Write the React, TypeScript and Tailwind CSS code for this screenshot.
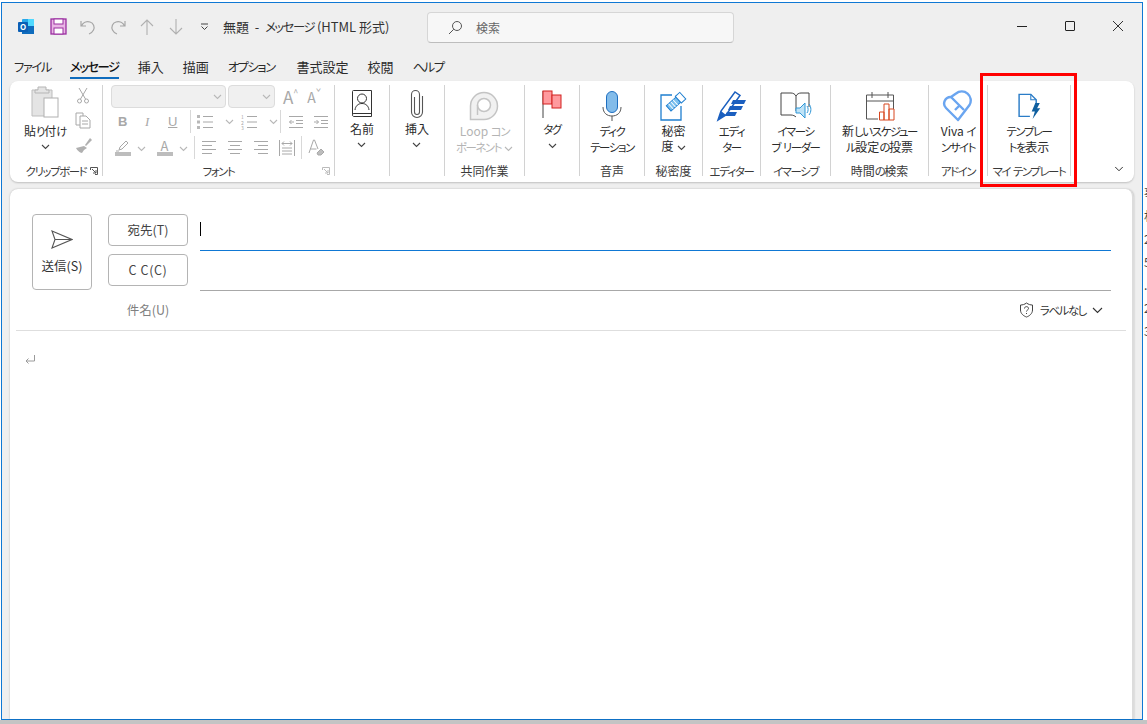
import type { ReactNode } from "react";
import { ChevronDown } from "lucide-react";

// the reference font sets kana much tighter than Noto, so kana runs get their own spacing
const Txt = ({ children }: { children: string }) => (
  <>
    {children.split(/([ぁ-んァ-ヶー]+)/).map((part, i) =>
      i % 2 === 1 ? (
        <span key={i} className="text-[0.95em] tracking-[-0.12em]">
          {part}
        </span>
      ) : (
        <span key={i}>{part}</span>
      )
    )}
  </>
);

const Chev = ({ className = "text-[#444]" }: { className?: string }) => (
  <svg width="9" height="6" viewBox="0 0 9 6" className={`inline-block ${className}`}>
    <path d="M1 1l3.500 3.500L8 1" fill="none" stroke="currentColor" strokeWidth="1.100" />
  </svg>
);

// one ribbon group, the label sits at the bottom
const Group = ({ w, label, children }: { w: string; label?: string; children: ReactNode }) => (
  <div className={`${w} relative flex flex-col shrink-0 border-r border-[#d2d2d2] h-[91px]`}>
    <div className="flex-1 flex justify-center">{children}</div>
    <div className="h-[16px] text-[12px] leading-[22px] text-center text-[#3a3a3a] whitespace-nowrap">
      {label && <Txt>{label}</Txt>}
    </div>
  </div>
);

const Big = ({
  icon,
  lines,
  chev,
  lineChev,
  gray,
  top = "pt-[4px]",
}: {
  icon: ReactNode;
  lines: string[];
  chev?: boolean;
  lineChev?: boolean;
  gray?: boolean;
  top?: string;
}) => (
  <div className={`flex flex-col items-center ${top}`}>
    <div className="h-[34px] flex items-center justify-center">{icon}</div>
    <div className={`text-[12px] leading-[15px] text-center whitespace-nowrap ${gray ? "text-[#b4b4b4]" : "text-[#2b2b2b]"}`}>
      {lines.map((l, i) => (
        <div key={l}>
          <Txt>{l}</Txt>
          {lineChev && i === lines.length - 1 && <Chev className={`ml-[3px] ${gray ? "text-[#b8b8b8]" : "text-[#444]"}`} />}
        </div>
      ))}
    </div>
    {chev && (
      <div className="mt-[1px] leading-none">
        <Chev />
      </div>
    )}
  </div>
);

const Lines = ({ kind }: { kind: "l" | "c" | "r" }) => {
  const short = kind === "l" ? "M1 5.500h10M1 13.500h10" : kind === "c" ? "M3 5.500h10M3 13.500h10" : "M5 5.500h10M5 13.500h10";
  return (
    <svg width="16" height="16" viewBox="0 0 16 16" stroke="#a8a8a8" fill="none">
      <path d="M1 1.500h14M1 9.500h14" />
      <path d={short} />
    </svg>
  );
};

const Bullets = ({ num }: { num?: boolean }) => (
  <svg width="26" height="16" viewBox="0 0 26 16" fill="none">
    {num ? (
      <>
        <text x="0" y="5" fontSize="5" fill="#a8a8a8">1</text>
        <text x="0" y="10.500" fontSize="5" fill="#a8a8a8">2</text>
        <text x="0" y="16" fontSize="5" fill="#a8a8a8">3</text>
      </>
    ) : (
      <>
        <rect x="0" y="1" width="3" height="3" fill="#b8b8b8" />
        <rect x="0" y="6.500" width="3" height="3" fill="#b8b8b8" />
        <rect x="0" y="12" width="3" height="3" fill="#b8b8b8" />
      </>
    )}
    <path d="M6 2.500h10M6 8h10M6 13.500h10" stroke="#a8a8a8" />
  </svg>
);

const PersonBook = () => (
  <svg width="22" height="30" viewBox="0 0 22 30" fill="none" stroke="#333" strokeWidth="1">
    <path d="M1.500 25.500V2.500a1 1 0 0 1 1-1h18v26H3a1.500 1.500 0 0 1-1.500-2 1.500 1.500 0 0 1 1.500-1h17.500" />
    <circle cx="11" cy="9.500" r="4.500" />
    <path d="M4 21c.5-4 3-6.500 7-6.500s6.500 2.500 7 6.500" />
  </svg>
);

const Clip = () => (
  <svg width="14" height="30" viewBox="0 0 14 30" fill="none" stroke="#555" strokeWidth="1.100">
    <path d="M4.500 8v15a2.500 2.500 0 0 0 5 0V5.500a4 4 0 0 0-8 0V23a5.500 5.500 0 0 0 11 0V7" />
  </svg>
);

const Loop = () => (
  <svg width="30" height="30" viewBox="0 0 30 30" fill="none" stroke="#c4c4c4" strokeWidth="1.500">
    <path d="M1.500 28.500V15a13.500 13.500 0 1 1 13.500 13.500z" fill="#f1f1f1" />
    <circle cx="15" cy="14" r="6.500" fill="#fff" />
    <path d="M8.500 14v10" />
  </svg>
);

const Flag = () => (
  <svg width="20" height="28" viewBox="0 0 20 28">
    <path d="M1 1v27" stroke="#444" strokeWidth="1" />
    <rect x="1" y="1" width="9" height="13" fill="#ff9a9e" stroke="#d2201f" />
    <rect x="10" y="5" width="9" height="13" fill="#ff9a9e" stroke="#d2201f" />
  </svg>
);

const Mic = () => (
  <svg width="20" height="30" viewBox="0 0 20 30" fill="none">
    <rect x="4.500" y="0.500" width="11" height="21" rx="5.500" fill="#83bcea" stroke="#1f6fc0" />
    <path d="M1 16c0 6 4 9 9 9s9-3 9-9M10 25v5" stroke="#555" />
  </svg>
);

const Sensitivity = () => (
  <svg width="30" height="30" viewBox="0 0 30 30" fill="none">
    <path d="M13 4H2v25h20V15" stroke="#1f7fd0" strokeWidth="1.300" />
    <g transform="rotate(-42 16 11)">
      <rect x="7" y="8" width="13" height="7" fill="#7cc0ee" stroke="#1f7fd0" />
      <rect x="20" y="7" width="6" height="9" fill="#fff" stroke="#1f7fd0" />
      <path d="M10 8v7M13 8v7M16 8v7" stroke="#fff" />
    </g>
  </svg>
);

const EditorPen = () => (
  <svg width="32" height="32" viewBox="0 0 32 32" fill="none">
    <path d="M2 30l3-9L19 2l5 3.500L10 25z" fill="#fff" stroke="#1b5fbf" strokeWidth="1.500" />
    <path d="M2 30l3-9 5 4z" fill="#1b5fbf" />
    <path d="M17 10h13l-2 4H15zM14 16h13l-2 4H12zM11 22h10l-2 4H9z" fill="#1b5fbf" />
  </svg>
);

const Reader = () => (
  <svg width="32" height="30" viewBox="0 0 32 30" fill="none">
    <path d="M1 2h10c2 0 4 1 5 3 1-2 3-3 5-3h8v14M1 2v22h10c2 0 4 1 5 2M16 5v15" stroke="#444" />
    <path d="M16 17h4l5-5v15l-5-5h-4z" fill="#bfe3f7" stroke="#2f96d6" />
    <path d="M27 15c1.500 2 1.500 5 0 7M29 13c2.500 3 2.500 8 0 11" stroke="#2f96d6" />
  </svg>
);

const Poll = () => (
  <svg width="30" height="30" viewBox="0 0 30 30" fill="none">
    <path d="M13 28H1.500V4h27v14M1.500 10h27M7 1v6M23 1v6" stroke="#555" />
    <path d="M14.500 21h4.500v8h-4.500zM19 13h5v16h-5zM24 18h5v11h-5z" fill="#fff" stroke="#d8461f" />
  </svg>
);

const Viva = () => (
  <svg width="32" height="32" viewBox="0 0 32 32" fill="none" stroke="#6aa5f0" strokeWidth="2.400" strokeLinejoin="round">
    <path d="M16 30L4 18A6.500 6.500 0 0 1 9 7l5-3.500A9 9 0 0 1 27.500 15z" />
    <path d="M9 7l13 13M13 20l4-4" />
  </svg>
);

const Template = () => (
  <svg width="24" height="27" viewBox="0 0 26 30" fill="none">
    <path d="M14 26H2V1.500h13l6 6v5" stroke="#2a7cc7" strokeWidth="1.600" />
    <path d="M15 1.500v6h6" stroke="#2a7cc7" strokeWidth="1.200" />
    <path d="M20 11h5l-3 6h3.500L17 29l2.500-8.500H16z" fill="#0f5f9f" />
  </svg>
);

const SmallRow = ({ children }: { children: ReactNode }) => <div className="flex items-center h-[25px] mt-px">{children}</div>;

const tabs = ["ファイル", "メッセージ", "挿入", "描画", "オプション", "書式設定", "校閲", "ヘルプ"];

export default function App() {
  return (
    <div
      className="relative w-[1147px] h-[724px] bg-white overflow-hidden text-[12px] [font-feature-settings:'palt']"
      style={{ fontFamily: "'Noto Sans CJK JP', 'Noto Sans', sans-serif" }}
    >
      <div className="flex">
        <div className="ml-px mt-[2px] w-[1142px] h-[718px] shrink-0 border border-[#0f78d4] bg-[#efefef] flex flex-col">
          {/* title bar */}
          <div className="relative h-[47px] flex items-center pl-[15px] shrink-0">
            <svg width="18" height="18" viewBox="0 0 18 18" className="mt-[1px]">
              <rect x="5" y="1" width="12" height="15" rx="1" fill="#28a8ea" />
              <rect x="11" y="1" width="6" height="7" fill="#50d9ff" />
              <rect x="5" y="8" width="12" height="8" fill="#0f6cbd" />
              <rect x="1" y="4" width="10" height="10" rx="1" fill="#0a5fb5" />
              <text x="3" y="12" fontSize="8" fontWeight="700" fill="#fff">O</text>
            </svg>
            <svg width="17" height="17" viewBox="0 0 17 17" className="ml-[15px]" fill="none">
              <rect x="1" y="1" width="15" height="15" fill="#e9b6e5" stroke="#9a2fa0" strokeWidth="1.300" />
              <rect x="4" y="1" width="9" height="5" fill="#fff" stroke="#9a2fa0" />
              <rect x="4" y="10" width="9" height="6" fill="#fff" stroke="#9a2fa0" />
            </svg>
            <svg width="16" height="16" viewBox="0 0 16 16" className="ml-[13px]" fill="none" stroke="#a6a6a6" strokeWidth="1.200">
              <path d="M1 2v5h5M1.500 7C3 3.500 6.500 2 10 3s5 5 3.500 8-3 3.500-4.500 4" />
            </svg>
            <svg width="16" height="16" viewBox="0 0 16 16" className="ml-[14px]" fill="none" stroke="#a6a6a6" strokeWidth="1.200">
              <path d="M15 2v5h-5M14.500 7C13 3.500 9.500 2 6 3S1 8 2.500 11s3 3.500 4.500 4" />
            </svg>
            <svg width="14" height="16" viewBox="0 0 14 16" className="ml-[14px]" fill="none" stroke="#b0b0b0" strokeWidth="1.100">
              <path d="M7 16V1M1 7l6-6 6 6" />
            </svg>
            <svg width="14" height="16" viewBox="0 0 14 16" className="ml-[15px]" fill="none" stroke="#b0b0b0" strokeWidth="1.100">
              <path d="M7 0v15M1 9l6 6 6-6" />
            </svg>
            <svg width="9" height="8" viewBox="0 0 9 8" className="ml-[17px]" fill="none" stroke="#444">
              <path d="M1 1h7M1.500 3.500L4.500 6.500 7.500 3.500" />
            </svg>
            <div className="ml-[14px] text-[13px] text-[#333] whitespace-nowrap">
              <Txt>{"無題\u00a0 - \u00a0メッセージ (HTML 形式)"}</Txt>
            </div>
            {/* search */}
            <div className="absolute left-[425px] top-[9px] w-[307px] h-[31px] rounded-[4px] border border-[#d6d6d6] border-b-[#bdbdbd] bg-[#f7f7f7] flex items-center pl-[20px]">
              <svg width="15" height="15" viewBox="0 0 15 15" fill="none" stroke="#555">
                <circle cx="9" cy="6" r="4.500" />
                <path d="M5.800 9.200L1 14" />
              </svg>
              <span className="ml-[13px] text-[#666]">検索</span>
            </div>
            {/* window controls */}
            <div className="absolute right-[19px] top-[18px] flex items-center gap-[38px]">
              <div className="w-[10px] h-px bg-[#222]" />
              <div className="w-[10px] h-[10px] border border-[#222] rounded-[1px]" />
              <svg width="10" height="10" viewBox="0 0 10 10" stroke="#333">
                <path d="M0 0l10 10M10 0L0 10" />
              </svg>
            </div>
          </div>

          {/* tabs */}
          <div className="h-[31px] shrink-0 flex gap-[19px] pl-[12px] text-[13px] text-[#2b2b2b] leading-[20px] pt-[7px]">
            {tabs.map((t) =>
              t === "メッセージ" ? (
                <span key={t} className="h-[20px] font-medium text-[#111] border-b-2 border-[#0f6cbd] box-content">
                  <Txt>{t}</Txt>
                </span>
              ) : (
                <span key={t} className={t === "オプション" ? "pr-[3px]" : ""}>
                  <Txt>{t}</Txt>
                </span>
              )
            )}
          </div>

          {/* ribbon */}
          <div className="relative mx-[8px] h-[101px] shrink-0 rounded-lg bg-white shadow-[0_1px_2px_rgba(0,0,0,0.2)] flex items-start pt-[4px]">
            <Group w="w-[93px]" label="クリップボード">
              <div className="flex w-full pr-[11px] pl-[5px]">
                <div className="flex-1 flex flex-col items-center pt-[1px]">
                  <svg width="28" height="32" viewBox="0 0 28 32" fill="none">
                    <path d="M1 4h20v26H1z" fill="#e4e4e4" stroke="#bdbdbd" />
                    <path d="M7 4V1h8v3h3v3H4V4z" fill="#e4e4e4" stroke="#b5b5b5" />
                    <rect x="13" y="12" width="14" height="19" fill="#fff" stroke="#b0b0b0" />
                  </svg>
                  <div className="mt-[5px] text-[12px] leading-[15px] text-[#2b2b2b] whitespace-nowrap">
                    <Txt>貼り付け</Txt>
                  </div>
                  <div className="leading-none">
                    <Chev />
                  </div>
                </div>
                <div className="w-[16px] flex flex-col items-center gap-[8px] pt-[2px]">
                  <svg width="12" height="17" viewBox="0 0 12 17" fill="none" stroke="#a8a8a8">
                    <path d="M2 1l6.500 11M10 1L3.500 12" />
                    <circle cx="2.500" cy="14" r="2" />
                    <circle cx="9.500" cy="14" r="2" />
                  </svg>
                  <svg width="16" height="17" viewBox="0 0 16 17" fill="none" stroke="#a8a8a8">
                    <path d="M5 13H1V1h7v3" />
                    <path d="M5 4h6l4 4v8H5zM7 9h6M7 12h6" fill="#fff" />
                  </svg>
                  <svg width="17" height="16" viewBox="0 0 17 16" fill="#b0b0b0">
                    <path d="M9 9L1 11c1 2 4 5 6 5l2-3 3-2z" />
                    <path d="M10 8l5-7 2 2-6 6z" />
                  </svg>
                </div>
              </div>
              <svg width="8" height="8" viewBox="0 0 8 8" fill="none" stroke="#555" className="absolute right-[4px] bottom-[1px]">
                <path d="M.5 3V.5H7.500V7.500H5M2 2l4 4M6 3v3H3" />
              </svg>
            </Group>

            {/* font */}
            <Group w="w-[232px]" label="フォント">
              <div className="w-full flex flex-col pl-[8px]">
                <div className="flex items-center h-[23px]">
                  <div className="w-[115px] h-[23px] rounded-[4px] border border-[#dcdcdc] bg-[#f0f0f0] flex items-center justify-end pr-[3px]">
                    <Chev className="text-[#b8b8b8]" />
                  </div>
                  <div className="ml-[2px] w-[47px] h-[23px] rounded-[4px] border border-[#dcdcdc] bg-[#f0f0f0] flex items-center justify-end pr-[3px]">
                    <Chev className="text-[#b8b8b8]" />
                  </div>
                  <span className="ml-[8px] text-[17px] leading-none text-[#a8a8a8]">A</span>
                  <span className="text-[9px] leading-none text-[#a8a8a8] -mt-[8px]">^</span>
                  <span className="ml-[9px] text-[14px] leading-none text-[#a8a8a8]">A</span>
                  <span className="text-[9px] leading-none text-[#a8a8a8] -mt-[8px]">ˇ</span>
                </div>
                <SmallRow>
                  <span className="ml-[7px] w-[14px] text-[13px] font-bold text-[#a8a8a8]" style={{ fontFamily: "'Liberation Sans', sans-serif" }}>B</span>
                  <span className="ml-[13px] w-[12px] text-[13px] italic text-[#a8a8a8]" style={{ fontFamily: "'Liberation Serif', serif" }}>I</span>
                  <span className="ml-[11px] w-[14px] text-[13px] underline text-[#a8a8a8]" style={{ fontFamily: "'Liberation Sans', sans-serif" }}>U</span>
                  <div className="ml-[8px] h-[23px] w-px bg-[#d8d8d8]" />
                  <div className="ml-[6px] flex items-center gap-[2px]">
                    <Bullets />
                    <Chev className="text-[#b8b8b8]" />
                  </div>
                  <div className="ml-[7px] flex items-center gap-[2px]">
                    <Bullets num />
                    <Chev className="text-[#b8b8b8]" />
                  </div>
                  <div className="ml-[2px] h-[23px] w-px bg-[#d8d8d8]" />
                  <svg width="16" height="14" viewBox="0 0 16 14" className="ml-[7px]" fill="none" stroke="#a8a8a8">
                    <path d="M1 1.500h14M8 5.500h7M8 8.500h7M1 12.500h14M6 7H1.500M3.500 5L1.500 7l2 2" />
                  </svg>
                  <svg width="16" height="14" viewBox="0 0 16 14" className="ml-[9px]" fill="none" stroke="#a8a8a8">
                    <path d="M1 1.500h14M8 5.500h7M8 8.500h7M1 12.500h14M1 7h4.500M3.500 5l2 2-2 2" />
                  </svg>
                </SmallRow>
                <SmallRow>
                  <div className="ml-[3px] flex flex-col items-center w-[17px]">
                    <svg width="16" height="12" viewBox="0 0 16 12" fill="none" stroke="#a8a8a8">
                      <path d="M4 10l1-3 6-6 2 2-6 6z" fill="#fff" />
                      <path d="M1 11h3" />
                    </svg>
                    <div className="h-[4px] w-[16px] bg-[#bdbdbd]" />
                  </div>
                  <div className="ml-[6px]">
                    <Chev className="text-[#b8b8b8]" />
                  </div>
                  <div className="ml-[10px] flex flex-col items-center w-[17px]">
                    <span className="text-[13px] leading-[12px] text-[#a8a8a8]">A</span>
                    <div className="h-[4px] w-[16px] bg-[#bdbdbd]" />
                  </div>
                  <div className="ml-[6px]">
                    <Chev className="text-[#b8b8b8]" />
                  </div>
                  <div className="ml-[6px] h-[23px] w-px bg-[#d8d8d8]" />
                  <div className="ml-[6px] flex gap-[10px]">
                    <Lines kind="l" />
                    <Lines kind="c" />
                    <Lines kind="r" />
                    <svg width="16" height="16" viewBox="0 0 16 16" fill="none" stroke="#a8a8a8">
                      <path d="M.5 0v16M15.500 0v16M3 8h10M3 11h10M3 14h10M3 3.500h10M5 1.500l-2 2 2 2M11 1.500l2 2-2 2" />
                    </svg>
                  </div>
                  <div className="ml-[6px] h-[23px] w-px bg-[#d8d8d8]" />
                  <svg width="17" height="17" viewBox="0 0 17 17" className="ml-[6px]" fill="none" stroke="#a8a8a8">
                    <path d="M1 14L5.500 1h1L10 10M2.500 10h6" />
                    <path d="M9 14l4-4 3 3-3 3h-3z" fill="#bdbdbd" />
                  </svg>
                </SmallRow>
              </div>
              <svg width="8" height="8" viewBox="0 0 8 8" fill="none" stroke="#bbb" className="absolute right-[4px] bottom-[1px]">
                <path d="M.5 3V.5H7.500V7.500H5M2 2l4 4M6 3v3H3" />
              </svg>
            </Group>

            <Group w="w-[55px]">
              <Big icon={<PersonBook />} lines={["名前"]} chev top="pt-[2px]" />
            </Group>
            <Group w="w-[55px]">
              <Big icon={<Clip />} lines={["挿入"]} chev top="pt-[2px]" />
            </Group>
            <Group w="w-[80px]" label="共同作業">
              <Big icon={<Loop />} gray lines={["Loop コン", "ポーネント"]} lineChev />
            </Group>
            <Group w="w-[55px]">
              <Big icon={<Flag />} lines={["タグ"]} chev top="pt-[2px]" />
            </Group>
            <Group w="w-[65px]" label="音声">
              <Big icon={<Mic />} lines={["ディク", "テーション"]} />
            </Group>
            <Group w="w-[58px]" label="秘密度">
              <Big icon={<Sensitivity />} lines={["秘密", "度"]} lineChev />
            </Group>
            <Group w="w-[58px]" label="エディター">
              <Big icon={<EditorPen />} lines={["エディ", "ター"]} />
            </Group>
            <Group w="w-[70px]" label="イマーシブ">
              <Big icon={<Reader />} lines={["イマーシ", "ブ リーダー"]} />
            </Group>
            <Group w="w-[98px]" label="時間の検索">
              <Big icon={<Poll />} lines={["新しいスケジュー", "ル設定の投票"]} />
            </Group>
            <Group w="w-[59px]" label="アドイン">
              <Big icon={<Viva />} lines={["Viva イ", "ンサイト"]} />
            </Group>
            <Group w="w-[83px]" label="マイ テンプレート">
              <Big icon={<Template />} lines={["テンプレー", "トを表示"]} />
            </Group>
            <ChevronDown size={14} strokeWidth={1.600} className="absolute right-[8px] bottom-[6px] text-[#222]" />
          </div>

          {/* compose */}
          <div className="mt-[7px] mx-[8px] flex-1 min-h-0 rounded-t-lg bg-white border-r-2 border-[#dcdcdc] shadow-[0_0_2px_rgba(0,0,0,0.25)] flex flex-col">
            <div className="flex pt-[25px] pl-[22px] pr-[21px] h-[141px] shrink-0">
              <div className="w-[60px] h-[76px] rounded-[4px] border border-[#b4b4b4] flex flex-col items-center pt-[15px] shrink-0">
                <svg width="22" height="19" viewBox="0 0 22 19" fill="none" stroke="#555" strokeWidth="1.100">
                  <path d="M1 1l20 8.500L1 18l3-8.500zM4 9.500h17" />
                </svg>
                <span className="mt-[8px] text-[12.5px] text-[#333]">送信(S)</span>
              </div>
              <div className="ml-[16px] flex flex-col items-center w-[80px] shrink-0">
                <div className="w-[80px] h-[32px] rounded-[4px] border border-[#b4b4b4] flex items-center justify-center text-[12.5px] text-[#444]">宛先(T)</div>
                <div className="mt-[8px] w-[80px] h-[32px] rounded-[4px] border border-[#b4b4b4] flex items-center justify-center text-[12.5px] tracking-[0.6px] text-[#444]">C&nbsp;C(C)</div>
                <div className="mt-[15px] text-[12.5px] text-[#808080]">件名(U)</div>
              </div>
              <div className="ml-[12px] flex-1 flex flex-col">
                <div className="relative h-[37px] border-b border-[#0f78d4]">
                  <div className="absolute left-0 top-[8px] w-px h-[14px] bg-black" />
                </div>
                <div className="h-[40px] border-b border-[#a8a8a8]" />
                <div className="mt-[10px] flex justify-end items-center gap-[6px] pr-[8px] text-[#333]">
                  <svg width="15" height="16" viewBox="0 0 15 16" fill="none" stroke="#444">
                    <path d="M7.500 1c2 1.500 4 2 6 2v5c0 3.500-3 6-6 7-3-1-6-3.500-6-7V3c2 0 4-.5 6-2z" />
                    <path d="M5.500 6.500c0-2.500 4-2.500 4 0 0 1.500-2 1.500-2 3M7.500 11v1" />
                  </svg>
                  <span>
                    <Txt>ラベルなし</Txt>
                  </span>
                  <svg width="11" height="7" viewBox="0 0 11 7" fill="none" stroke="#333" strokeWidth="1.100">
                    <path d="M1 1l4.500 4.500L10 1" />
                  </svg>
                </div>
              </div>
            </div>
            <div className="mx-[6px] h-px bg-[#dedede]" />
            <div className="pl-[15px] pt-[24px]">
              <svg width="10" height="10" viewBox="0 0 10 10" fill="none" stroke="#9a9a9a">
                <path d="M9.500 0v6H1M3.500 3.500L1 6l2.500 2.500" />
              </svg>
            </div>
          </div>
        </div>
        {/* what shows of the window behind, on the right */}
        <div className="flex-1 pl-px text-[12px] text-[#444] leading-[23px] pt-[181px] overflow-hidden whitespace-nowrap">
          <div>事</div>
          <div>村</div>
          <div>2</div>
          <div>5</div>
          <div>.</div>
          <div>2</div>
          <div>3</div>
        </div>
      </div>
      <div className="absolute left-0 right-0 bottom-0 h-[4px] bg-[#c4c4c4]" />

      {/* red highlight drawn over the ribbon */}
      <div className="absolute left-[980px] top-[73px] w-[97px] h-[114px] border-[3px] border-[#ff0000]" />
    </div>
  );
}
